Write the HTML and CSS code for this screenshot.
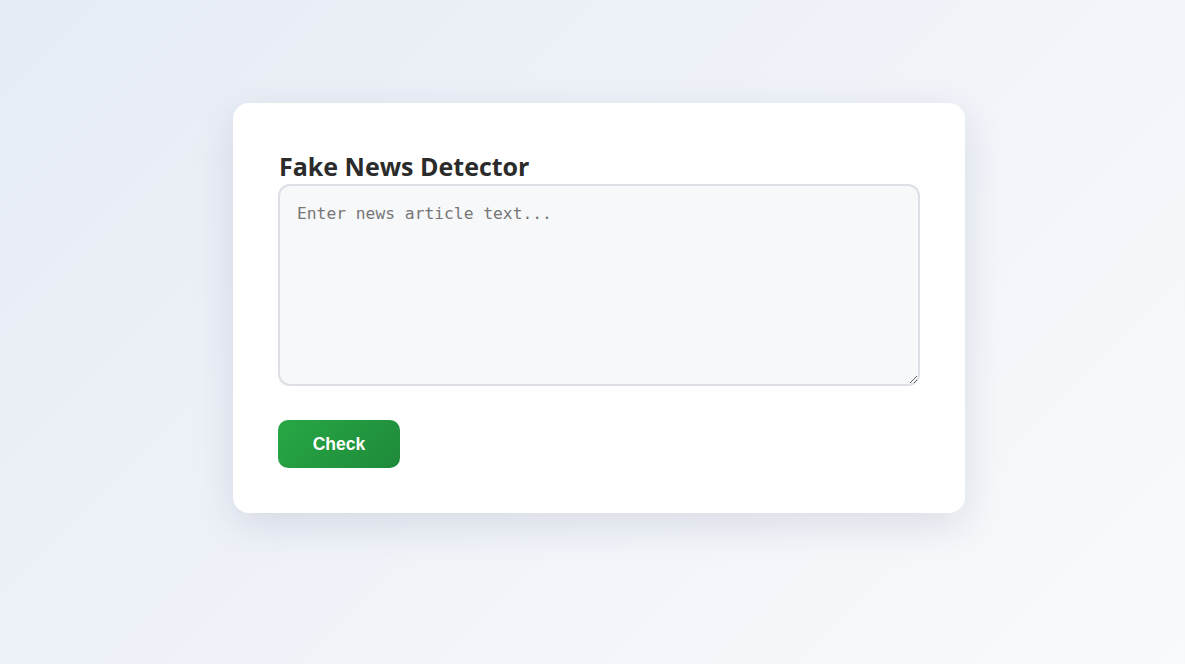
FILE: index.html
```html
<!DOCTYPE html>
<html lang="en">
<head>
<meta charset="utf-8">
<title>Fake News Detector</title>
<link rel="stylesheet" href="styles.css">
</head>
<body>
  <main class="card">
    <h2 class="title">Fake News Detector</h2>
    <textarea class="input" placeholder="Enter news article text..."></textarea>
    <button class="btn" type="button">Check</button>
  </main>
</body>
</html>
```

FILE: styles.css
```css
html, body {
  margin: 0;
  height: 100%;
}
body {
  background: linear-gradient(135deg, #e6ecf5 0%, #f9fafc 100%);
  font-family: "Open Sans", "Noto Sans", sans-serif;
  padding: 103px 0 0 13px;
  box-sizing: border-box;
}
.card {
  width: 732px;
  box-sizing: border-box;
  margin: 0 auto;
  background: #ffffff;
  border-radius: 16px;
  padding: 45px;
  box-shadow: 0 12px 40px rgba(30, 45, 80, 0.12);
  display: flex;
  flex-direction: column;
  align-items: flex-start;
}
.title {
  margin: 0;
  padding-left: 1px;
  font-size: 25px;
  line-height: 37px;
  height: 36px;
  font-weight: 700;
  color: #2b2b2b;
}
.input {
  width: 642px;
  height: 202px;
  box-sizing: border-box;
  border: 2px solid #dcdfe5;
  border-radius: 12px;
  background: #f7f8fa;
  padding: 18px 17px;
  font-family: "DejaVu Sans Mono", monospace;
  font-size: 16.3px;
  color: #333;
  margin: 0;
  outline: none;
}
.input::placeholder {
  color: #767676;
}
.btn {
  margin-top: 34px;
  width: 122px;
  height: 48px;
  border: none;
  border-radius: 10px;
  background: linear-gradient(135deg, #28a745 0%, #1e8a3a 100%);
  color: #ffffff;
  font-family: "Liberation Sans", Arial, sans-serif;
  font-weight: 700;
  font-size: 17.5px;
  cursor: pointer;
}
```
